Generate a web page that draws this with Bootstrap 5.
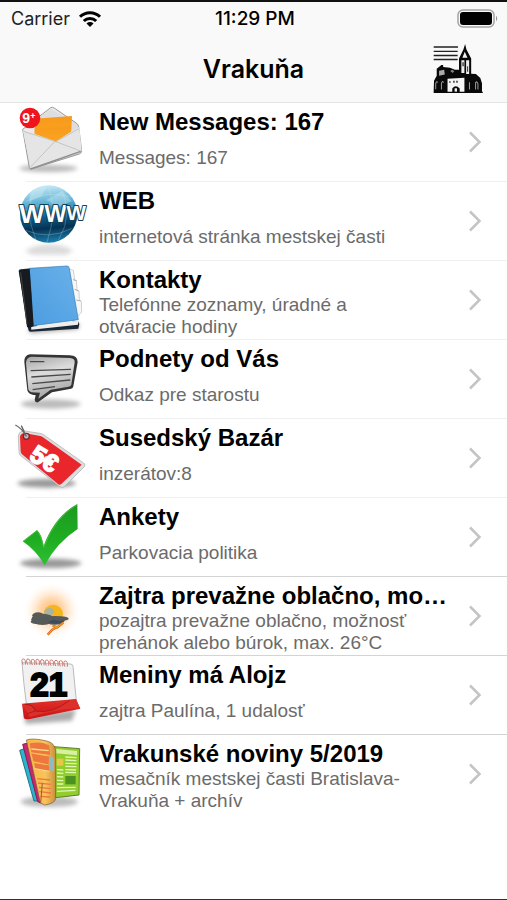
<!DOCTYPE html>
<html lang="sk">
<head>
<meta charset="utf-8">
<meta name="viewport" content="width=device-width, initial-scale=1">
<title>Vrakuňa</title>
<link href="https://cdn.jsdelivr.net/npm/bootstrap@5.3.0/dist/css/bootstrap.min.css" rel="stylesheet">
<style>
body{font-family:"Liberation Sans",Arial,sans-serif;background:#fff;color:#000}
.screen{border-top:2px solid #111;border-bottom:1px solid #333}
.top-area{background:#f9f9f9;border-bottom:1px solid #e4e4e4;font-family:Inter,sans-serif}
.status{height:33px;padding:0 8px 0 11px;font-size:18px;line-height:24px}
.status>*{flex:1 1 0}
.carrier{color:#222}
.clock{font-size:19px;font-weight:500}
.title-bar{height:67px;padding:0 24px}
.title-bar>*{flex:1 1 0}
.title-bar h1{font-size:25px;line-height:32px;font-weight:600}
.entry{height:79px;color:#000;background:linear-gradient(#efefef,#efefef) 26px 100%/100% 1px no-repeat}
.entry.strong-line{background-image:linear-gradient(#d4d4d4,#d4d4d4)}
li:last-child .entry{background:none}
.pic{width:87px;height:78px;margin-left:10px}
.entry-text{padding-top:5px;padding-left:2px}
.entry-title{font-size:24px;line-height:28px;font-weight:700}
.entry-sub{font-size:19px;line-height:22px;height:43px;padding-right:30px;color:#6b6b6b}
.chev{width:14px;height:22px;margin:0 25px 2px 16px}
</style>
<script src="https://cdn.jsdelivr.net/npm/bootstrap@5.3.0/dist/js/bootstrap.bundle.min.js"></script>
</head>
<body>
<svg width="0" height="0" class="position-absolute" aria-hidden="true">
<defs>
<filter id="soft" x="-30%" y="-80%" width="160%" height="260%"><feGaussianBlur stdDeviation="6"/></filter>
<filter id="soft2" x="-20%" y="-20%" width="140%" height="140%"><feGaussianBlur stdDeviation="2"/></filter>
<linearGradient id="paper" x1="0" y1="0" x2="1" y2="1"><stop offset="0" stop-color="#f4f4f4"/><stop offset="1" stop-color="#cfcfcf"/></linearGradient>
<linearGradient id="orange" x1="0" y1="0" x2="0" y2="1"><stop offset="0" stop-color="#f79a1c"/><stop offset="1" stop-color="#fba41f"/></linearGradient>
<linearGradient id="globe" x1=".4" y1="0" x2=".5" y2="1"><stop offset="0" stop-color="#c8eaf6"/><stop offset=".3" stop-color="#5fb2d4"/><stop offset=".55" stop-color="#0c5f8e"/><stop offset=".75" stop-color="#053252"/><stop offset="1" stop-color="#1b7fae"/></linearGradient>
<linearGradient id="book" x1="0" y1="1" x2="1" y2="0"><stop offset="0" stop-color="#4c9ce0"/><stop offset="1" stop-color="#69b1ea"/></linearGradient>
<linearGradient id="bubble" x1="0" y1="0" x2=".3" y2="1"><stop offset="0" stop-color="#a4a4a4"/><stop offset=".45" stop-color="#dcdcdc"/><stop offset="1" stop-color="#a6a6a6"/></linearGradient>
<linearGradient id="check" x1="0" y1="0" x2="0" y2="1"><stop offset="0" stop-color="#1c9a20"/><stop offset=".6" stop-color="#1fae22"/><stop offset="1" stop-color="#2fc033"/></linearGradient>
<radialGradient id="glow"><stop offset="0" stop-color="#ffb45c"/><stop offset=".45" stop-color="#ffcf9b" stop-opacity=".8"/><stop offset="1" stop-color="#fff0e0" stop-opacity="0"/></radialGradient>
<linearGradient id="red" x1="0" y1="0" x2="0" y2="1"><stop offset="0" stop-color="#e2302a"/><stop offset="1" stop-color="#c91414"/></linearGradient>
<linearGradient id="fold" x1="0" y1="0" x2="1" y2="0"><stop offset="0" stop-color="#f9b445"/><stop offset=".65" stop-color="#f8c45a"/><stop offset="1" stop-color="#c98f3e"/></linearGradient>
<symbol id="arrow" viewBox="0 0 14 22"><path d="M2 1.500L11.500 11L2 20.500" fill="none" stroke="#c4c4c6" stroke-width="2.500"/></symbol>
</defs>
</svg>

<div class="screen min-vh-100">
<header class="top-area">
  <div class="status d-flex align-items-center">
    <div class="carrier d-flex align-items-center">Carrier
      <svg class="ms-2" width="24" height="18" viewBox="0 0 23 18" aria-hidden="true"><g fill="none" stroke="#000" stroke-width="3"><path d="M1.500 6.800a14.200 14.200 0 0 1 20 0"/><path d="M5.300 11a8.800 8.800 0 0 1 12.400 0"/></g><path d="M8 13.500a5 5 0 0 1 7 0L11.500 17z"/></svg>
    </div>
    <div class="clock text-center text-nowrap">11:29 PM</div>
    <div class="d-flex justify-content-end">
      <svg width="42" height="19" viewBox="0 0 42 19" role="img" aria-label="Battery"><rect x="1" y="1" width="36" height="17" rx="5" fill="none" stroke="#a4a4a4" stroke-width="1.500"/><rect x="3" y="3" width="32" height="13" rx="3"/><path d="M39 6.500q2.500 3 0 6z" fill="#999"/></svg>
    </div>
  </div>
  <div class="title-bar d-flex align-items-center">
    <span></span>
    <h1 class="m-0 text-center">Vrakuňa</h1>
    <div class="d-flex justify-content-end">
      <button type="button" class="btn p-0 border-0 d-flex" aria-label="Mestská časť">
        <svg width="50" height="50" viewBox="40 22 148 148" aria-hidden="true">
          <path d="M42 31h72M42 44h71M42 56h71M42 68h71" stroke="#222" stroke-width="4"/>
          <path d="M135 22l4 16 14 27v45l14 1 13 12 5 15v23l3 6H42v-6l1-30 8-15V95l14-11h5v6l20 2 15 6 12 0V65l13-27z" fill="#090909"/>
          <path d="M134 45l-7 18h15z" fill="#f3f3f3"/><path d="M124 70h9v38h-9zM138 70h9v41h-9z" fill="#eee"/>
          <path d="M127 76h4v12h-4zM141 88h3v16h-3z" fill="#333"/>
          <path d="M83 125l50-3v41h-14v-9q-12-14-22 0v9H83z" fill="#f5f5f5"/>
          <path d="M88 132h4v5h-4zM100 131h4v6h-4zM109 131h4v6h-4z" fill="#222"/><path d="M104 163v-10h7v10z" fill="#eee"/>
          <path d="M58 101l15-3 2 14-17 4z" fill="#aaa"/><path d="M91 102l6-4 6 5-5 5z" fill="#888"/>
          <path d="M48 156v-17q3-9 6-3M65 157v-19q4-9 6-1M148 157v-22M166 157v-20q4-7 7 3v17" fill="none" stroke="#999" stroke-width="3"/>
        </svg>
      </button>
    </div>
  </div>
</header>

<main>
<ul class="list-unstyled m-0">
<li><a href="#" class="entry d-flex text-decoration-none">
  <svg class="pic flex-shrink-0" viewBox="0 9 261 234" aria-hidden="true">
    <ellipse cx="115" cy="205" rx="88" ry="11" fill="#bbb" filter="url(#soft)"/>
    <path d="M38 88L122 23q6-3 12 2l66 45q5 4 6 10l9 73q0 6-7 9L64 207q-5 2-6-4z" fill="url(#paper)" stroke="#999" stroke-width="3"/>
    <path d="M75 60L123 27l76 46-16 30-100 8z" fill="#dedede"/>
    <path d="M74 56l112-8-3 63-45 14-64-24z" fill="url(#orange)"/>
    <path d="M38 90l97 32 73-42 7 74L62 204z" fill="#e5e5e5"/>
    <path d="M74 86l109-8v17l-45 29-64-23z" fill="url(#orange)"/>
    <path d="M40 94l98 31 69-39M60 203l75-79 77 29" fill="none" stroke="#b4b4b4" stroke-width="2"/>
    <path d="M62 207l150-53" stroke="#8f8f8f" stroke-width="4"/>
    <circle cx="60" cy="54" r="31" fill="#ee151d"/>
    <text x="37" y="69" font-family="Liberation Sans,sans-serif" font-size="42" font-weight="700" fill="#fff">9<tspan font-size="27" dy="-11">+</tspan></text>
  </svg>
  <div class="entry-text flex-grow-1 overflow-hidden"><div class="entry-title text-truncate">New Messages: 167</div><div class="entry-sub d-flex align-items-center">Messages: 167</div></div>
  <svg class="chev flex-shrink-0 align-self-center"><use href="#arrow"/></svg>
</a></li>

<li><a href="#" class="entry d-flex text-decoration-none">
  <svg class="pic flex-shrink-0" viewBox="0 6 261 234" aria-hidden="true">
    <path d="M45 212q75-38 145 0l-22 12H66z" fill="#ccc" opacity=".7" filter="url(#soft)"/>
    <circle cx="116" cy="102" r="86" fill="url(#globe)"/>
    <path d="M48 64q60-35 141-12M34 96q70-40 165-15M75 27q-34 65 2 150M115 17q28 75-4 170M151 24q42 75-5 155M47 151q68 30 137-5" fill="none" stroke="#cdebf5" stroke-width="2" opacity=".4"/>
    <path d="M60 40q20-20 48-20l-12 28-39 17zM108 60l49-27 28 31-40 16z" fill="#d8f1f8" opacity=".35"/>
    <text x="28" y="130" font-family="Liberation Sans,sans-serif" font-weight="700" fill="#fff" stroke="#134054" stroke-width="6" paint-order="stroke" stroke-linejoin="round" font-size="80">W<tspan font-size="70" dy="-5">W</tspan><tspan font-size="62" dy="-4">W</tspan></text>
  </svg>
  <div class="entry-text flex-grow-1 overflow-hidden"><div class="entry-title text-truncate">WEB</div><div class="entry-sub d-flex align-items-center">internetová stránka mestskej časti</div></div>
  <svg class="chev flex-shrink-0 align-self-center"><use href="#arrow"/></svg>
</a></li>

<li><a href="#" class="entry d-flex text-decoration-none">
  <svg class="pic flex-shrink-0" viewBox="0 9 261 234" aria-hidden="true">
    <path d="M50 215l160-18-6 17-140 12z" fill="#aaa" filter="url(#soft)"/>
    <path d="M172 31l18 6 4 28 5 4 2 25 6 6 1 24 6 6 1 32-26 30z" fill="#f7f7f7" stroke="#bbb" stroke-width="2"/>
    <path d="M189 65l11 3M194 94l12 5M199 126l13 3" stroke="#aaa" stroke-width="3"/>
    <path d="M26 39q0-5 6-5l32-3 17 178 123-20 4 9-3 14-142 9q-7 1-8-6z" fill="#1b2835"/>
    <path d="M63 206l142-18-1 12-140 15z" fill="#eee"/>
    <path d="M58 31l113-7q6 0 7 7l27 154-136 18q-4-85-11-172z" fill="url(#book)" stroke="#337cb8" stroke-width="2"/>
    <path d="M27 39l32-6q6 80 12 170l-12 8-8-4z" fill="#171b1f"/><path d="M32 43l19 155" stroke="#444" stroke-width="3"/>
  </svg>
  <div class="entry-text flex-grow-1 overflow-hidden"><div class="entry-title text-truncate">Kontakty</div><div class="entry-sub d-flex align-items-center">Telefónne zoznamy, úradné a otváracie hodiny</div></div>
  <svg class="chev flex-shrink-0 align-self-center"><use href="#arrow"/></svg>
</a></li>

<li><a href="#" class="entry d-flex text-decoration-none">
  <svg class="pic flex-shrink-0" viewBox="0 0 261 234" aria-hidden="true">
    <ellipse cx="122" cy="192" rx="90" ry="14" fill="#bbb" filter="url(#soft)"/>
    <path d="M60 43l119 3q24 1 24 20l-13 73q-2 8-11 8l-53 10-42 30q-9 2-10-7l3-14q-22-1-25-15L43 66q-1-20 17-23z" fill="#343434"/>
    <path d="M64 50l116 4q15 1 14 13l-10 67q-1 5-8 6l-54 9-37 27 5-18-26-1q-7-1-9-9l-7-79q0-16 16-19z" fill="url(#bubble)"/>
    <path d="M60 65h43M62 92l121-4M64 111l118-8M67 131l114-11M68 149l67-9" stroke="#494949" stroke-width="4"/>
  </svg>
  <div class="entry-text flex-grow-1 overflow-hidden"><div class="entry-title text-truncate">Podnety od Vás</div><div class="entry-sub d-flex align-items-center">Odkaz pre starostu</div></div>
  <svg class="chev flex-shrink-0 align-self-center"><use href="#arrow"/></svg>
</a></li>

<li><a href="#" class="entry d-flex text-decoration-none">
  <svg class="pic flex-shrink-0" viewBox="0 -3 261 234" aria-hidden="true">
    <ellipse cx="110" cy="190" rx="88" ry="13" fill="#999" filter="url(#soft)"/>
    <path d="M25 48q1-12 14-16l50 8q8 1 13 5l119 84q7 5 2 11l-60 60q-6 6-13 0L32 107q-5-4-5-12z" fill="#ddd" stroke="#aaa" stroke-width="2"/>
    <path d="M30 50q2-9 12-11l45 8q7 1 12 5l116 82-61 58q-5 4-10 0L36 103q-4-4-4-10z" fill="#e9262b"/>
    <circle cx="49" cy="49" r="9" fill="#bbb" stroke="#852024" stroke-width="4"/>
    <path d="M49 49Q35 24 16 15M47 47Q42 33 34 17" fill="none" stroke="#666" stroke-width="4"/>
    <g transform="rotate(31 108 120)"><text x="61" y="145" font-family="Liberation Sans,sans-serif" font-weight="700" font-size="74" fill="#fff" stroke="#fff" stroke-width="5">5€</text></g>
  </svg>
  <div class="entry-text flex-grow-1 overflow-hidden"><div class="entry-title text-truncate">Susedský Bazár</div><div class="entry-sub d-flex align-items-center">inzerátov:8</div></div>
  <svg class="chev flex-shrink-0 align-self-center"><use href="#arrow"/></svg>
</a></li>

<li><a href="#" class="entry strong-line d-flex text-decoration-none">
  <svg class="pic flex-shrink-0" viewBox="0 -6 261 234" aria-hidden="true">
    <ellipse cx="122" cy="190" rx="92" ry="14" fill="#999" filter="url(#soft)"/>
    <path d="M38 124l43-34q14 12 20 47 34-89 101-125l1 75q-62 40-99 109-27-46-66-72z" fill="url(#check)"/>
    <path d="M40 124l41-32q12 14 20 50 34-90 100-128" fill="none" stroke="#59c84d" stroke-width="2"/>
  </svg>
  <div class="entry-text flex-grow-1 overflow-hidden"><div class="entry-title text-truncate">Ankety</div><div class="entry-sub d-flex align-items-center">Parkovacia politika</div></div>
  <svg class="chev flex-shrink-0 align-self-center"><use href="#arrow"/></svg>
</a></li>

<li><a href="#" class="entry strong-line d-flex text-decoration-none">
  <svg class="pic flex-shrink-0" viewBox="0 231 261 234" aria-hidden="true">
    <circle cx="125" cy="333" r="83" fill="url(#glow)"/>
    <circle cx="130" cy="343" r="29" fill="#f7b51c" filter="url(#soft2)"/>
    <ellipse cx="118" cy="335" rx="15" ry="11" fill="#a9b3a4" filter="url(#soft2)"/>
    <g fill="#565a58" filter="url(#soft2)"><ellipse cx="84" cy="346" rx="17" ry="9"/><ellipse cx="98" cy="358" rx="34" ry="17"/><ellipse cx="134" cy="361" rx="30" ry="13"/><ellipse cx="152" cy="356" rx="24" ry="7"/><ellipse cx="86" cy="365" rx="24" ry="8"/></g>
    <path d="M114 366l17-7 18 5 12-5-5 10-23 2z" fill="#3b4b61"/>
    <path d="M128 377l14 5 18-14M143 380l-16 9-14 15" fill="none" stroke="#d9671b" stroke-width="7"/><path d="M128 377l14 5 18-14M143 380l-16 9-14 15" fill="none" stroke="#f5ae2c" stroke-width="3"/>
  </svg>
  <div class="entry-text flex-grow-1 overflow-hidden"><div class="entry-title text-truncate">Zajtra prevažne oblačno, mo…</div><div class="entry-sub d-flex align-items-center">pozajtra prevažne oblačno, možnosť prehánok alebo búrok, max. 26°C</div></div>
  <svg class="chev flex-shrink-0 align-self-center"><use href="#arrow"/></svg>
</a></li>

<li><a href="#" class="entry strong-line d-flex text-decoration-none">
  <svg class="pic flex-shrink-0" viewBox="0 3 261 234" aria-hidden="true">
    <path d="M43 183l155-20-12 34-139 10z" fill="#aaa" filter="url(#soft)"/>
    <path d="M36 23l145 4q7 0 8 7l10 103-150 10q-8-60-13-124z" fill="#f1f1f1" stroke="#bbb" stroke-width="3"/>
    <path d="M36 146l162-14 13 29-155 32q-15 1-15-8z" fill="url(#red)"/>
    <path d="M38 148q30 2 38 20 47 9 103-33l19-2 12 27q-66 0-151 27z" fill="#de302b"/>
    <path d="M77 168q48 10 102-32M44 148q27-1 32 20l-25 8" fill="none" stroke="#961313" stroke-width="2"/>
    <g fill="none" stroke="#c97770" stroke-width="3"><path d="M39 29q-7-17 1-17t6 17M53 29q-7-17 1-17t6 17M67 30q-7-17 1-17t6 17M81 30q-7-17 1-17t6 17M95 31q-7-17 1-17t6 17M109 32q-7-17 1-17t6 17M123 32q-7-17 1-17t6 17M137 33q-7-17 1-17t6 17M151 34q-7-17 1-17t6 17M165 35q-7-17 1-17t6 17"/></g>
    <text x="61" y="122" font-family="Liberation Sans,sans-serif" font-size="100" font-weight="700" stroke="#000" stroke-width="6">21</text>
  </svg>
  <div class="entry-text flex-grow-1 overflow-hidden"><div class="entry-title text-truncate">Meniny má Alojz</div><div class="entry-sub d-flex align-items-center">zajtra Paulína, 1 udalosť</div></div>
  <svg class="chev flex-shrink-0 align-self-center"><use href="#arrow"/></svg>
</a></li>

<li><a href="#" class="entry d-flex text-decoration-none">
  <svg class="pic flex-shrink-0" viewBox="0 240 261 234" aria-hidden="true">
    <ellipse cx="118" cy="440" rx="86" ry="16" fill="#bbb" filter="url(#soft)"/>
    <path d="M132 275l77 6-2 139-71 8z" fill="#91ce2d" stroke="#627d29" stroke-width="3"/>
    <path d="M139 282l62 6v13l-62-6z" fill="#d9f0a3"/>
    <path d="M166 306l34 2M166 315l33 2M166 325l34 1M166 334l33 1M141 344l19 1M141 354l19 1M141 365l19 1M141 376l19 1M141 387l19 0M141 398l56-1M141 409l55-3M166 344l32 1M166 352l32 1" stroke="#e2f7b4" stroke-width="4"/>
    <path d="M140 311h20v21h-20z" fill="#e6c845"/><path d="M166 363h31v25h-31z" fill="#4c9220"/>
    <path d="M29 286l20-7 41 158-18 1z" fill="#28b6cf" stroke="#257483" stroke-width="3"/>
    <path d="M38 268l24-6 31 182-10-4z" fill="#c72871" stroke="#852052" stroke-width="3"/>
    <path d="M49 255q20-7 61 3 24 5 27 29v143q-1 15-33 20l-13-7z" fill="url(#fold)" stroke="#7c5634" stroke-width="2"/>
    <path d="M61 267q34-7 55 6l2 25-52-8zM67 298l48 8-1 20-42-9zM75 327l41 6v15l-38-7zM82 371l38 4M84 384l38 4M87 397l35 4M88 410l35 4M91 424l30 2" fill="#ed783d" stroke="#ed783d" stroke-width="4"/>
    <path d="M118 303l14 6v40l-14-4z" fill="#8ebac0"/><path d="M64 282l52 5M73 341l45 8" stroke="#fbdc8c" stroke-width="4"/>
    <path d="M92 443l5-58" stroke="#a95538" stroke-width="3"/>
  </svg>
  <div class="entry-text flex-grow-1 overflow-hidden"><div class="entry-title text-truncate">Vrakunské noviny 5/2019</div><div class="entry-sub d-flex align-items-center">mesačník mestskej časti Bratislava-Vrakuňa + archív</div></div>
  <svg class="chev flex-shrink-0 align-self-center"><use href="#arrow"/></svg>
</a></li>
</ul>
</main>
</div>
</body>
</html>
